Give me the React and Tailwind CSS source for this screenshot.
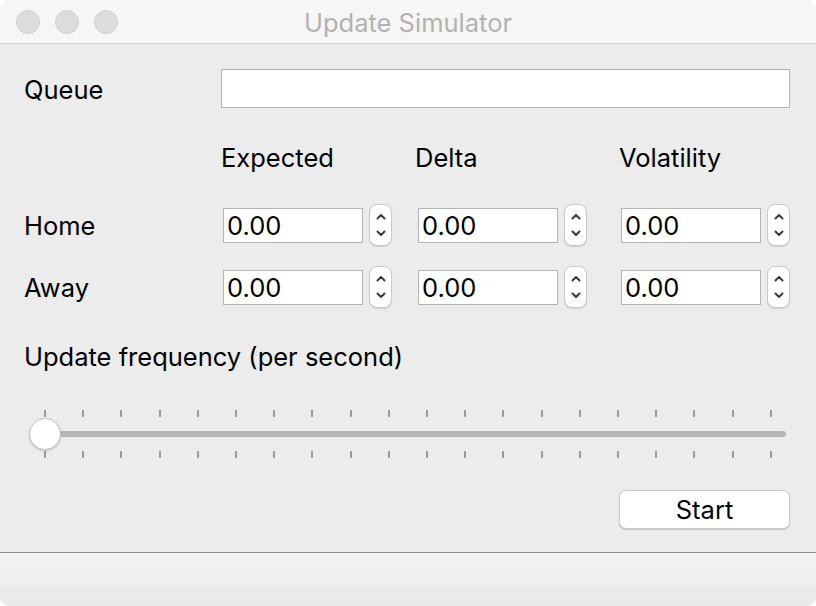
function Chevrons() {
  return (
    <svg width="12" height="30" viewBox="0 0 12 30" fill="none" stroke="#3a3a3a" strokeWidth="2" strokeLinecap="round" strokeLinejoin="round">
      <path d="M2.5 8.5 L6 5 L9.5 8.5" />
      <path d="M2.5 21.5 L6 25 L9.5 21.5" />
    </svg>
  )
}

function SpinBox({ className = '' }) {
  return (
    <div className={`flex items-center ${className}`}>
      <div className="w-[140px] h-[35px] bg-white border border-[#b4b4b4] flex items-center pl-[3px] pt-[2px] text-[25.5px] text-black">
        0.00
      </div>
      <div className="ml-[6px] w-[23px] h-[42px] bg-white border border-[#c9c9c9] rounded-[8px] shadow-[0_1px_1px_rgba(0,0,0,0.12)] flex items-center justify-center">
        <Chevrons />
      </div>
    </div>
  )
}

function SpinRow({ label }) {
  return (
    <div className="flex items-center h-[42px]">
      <div className="w-[199px] pt-[2px] text-[25.5px] text-black">{label}</div>
      <SpinBox />
      <SpinBox className="ml-[26px]" />
      <SpinBox className="ml-[34px]" />
    </div>
  )
}

function Slider() {
  const ticks = Array.from({ length: 20 })
  return (
    <div className="relative h-[60px] mt-[34px]">
      <div className="absolute left-[20px] right-[18px] top-[6px] flex justify-between">
        {ticks.map((_, i) => (
          <div key={i} className="w-[2px] h-[7px] bg-[#9b9b9b]" />
        ))}
      </div>
      <div className="absolute left-[20px] right-[18px] top-[47px] flex justify-between">
        {ticks.map((_, i) => (
          <div key={i} className="w-[2px] h-[7px] bg-[#9b9b9b]" />
        ))}
      </div>
      <div className="absolute left-[20px] right-[4px] top-[27px] h-[6px] rounded-full bg-[#b6b6b6]" />
      <div className="absolute left-[5px] top-[14px] w-[32px] h-[32px] rounded-full bg-white border border-[#c4c4c4] shadow-[0_1px_2px_rgba(0,0,0,0.2)]" />
    </div>
  )
}

export default function App() {
  return (
    <div className="w-[816px] h-[606px] bg-white" style={{ fontFamily: 'Inter, "Liberation Sans", Arial, sans-serif' }}>
      <div className="w-full h-full rounded-[10px] overflow-hidden bg-[#ececec] flex flex-col">
        <div className="relative h-[44px] bg-[#f6f6f6] border-b border-[#d2d2d2] flex items-center justify-center shrink-0">
          <div className="absolute left-[16px] top-[10px] flex gap-[15px]">
            <div className="w-[24px] h-[24px] rounded-full bg-[#dcdcdc] border border-[#d0d0d0]" />
            <div className="w-[24px] h-[24px] rounded-full bg-[#dcdcdc] border border-[#d0d0d0]" />
            <div className="w-[24px] h-[24px] rounded-full bg-[#dcdcdc] border border-[#d0d0d0]" />
          </div>
          <span className="pt-[3px] text-[25.5px] text-[#b2b2b2]">Update Simulator</span>
        </div>

        <div className="flex-1 flex flex-col pl-[24px] pr-[26px]">
          <div className="flex items-center mt-[25px] h-[39px]">
            <div className="w-[197px] pt-[3px] text-[25.5px] text-black">Queue</div>
            <div className="flex-1 h-[39px] bg-white border border-[#b4b4b4]" />
          </div>

          <div className="flex mt-[37px] text-[25.5px] leading-[26px] text-black">
            <div className="w-[197px]" />
            <div className="w-[194px]">Expected</div>
            <div className="w-[204px]">Delta</div>
            <div>Volatility</div>
          </div>

          <div className="mt-[33px]">
            <SpinRow label="Home" />
          </div>
          <div className="mt-[20px]">
            <SpinRow label="Away" />
          </div>

          <div className="mt-[36px] text-[25.5px] leading-[26px] text-black">
            Update frequency (per second)
          </div>

          <Slider />

          <div className="flex justify-end mt-[26px]">
            <button className="w-[171px] h-[39px] bg-white rounded-[7px] border border-[#cbcbcb] shadow-[0_1px_1px_rgba(0,0,0,0.18)] text-[25.5px] text-black">
              Start
            </button>
          </div>
        </div>

        <div className="h-[54px] shrink-0 border-t border-[#8f8f8f] bg-gradient-to-b from-[#f4f4f4] to-[#e8e8e8]" />
      </div>
    </div>
  )
}
